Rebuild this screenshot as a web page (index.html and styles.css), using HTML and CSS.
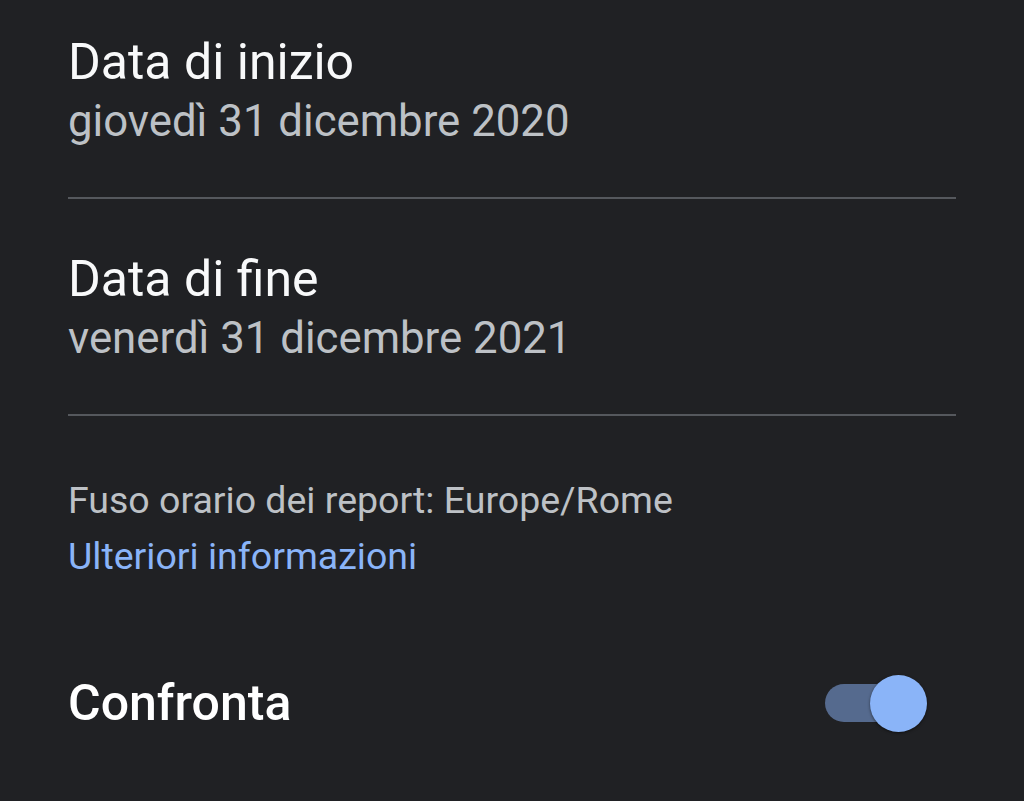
FILE: index.html
```html
<!DOCTYPE html>
<html lang="it">
<head>
  <meta charset="UTF-8" />
  <meta name="viewport" content="width=device-width, initial-scale=1.0" />
  <title>Intervallo di date</title>
  <link rel="stylesheet" href="styles.css">
</head>
<body>
  <div class="screen">
    <!-- Date rows -->
    <div class="date-item">
      <div class="item-title">Data di inizio</div>
      <div class="item-value">giovedì 31 dicembre 2020</div>
    </div>
    <div class="date-item">
      <div class="item-title">Data di fine</div>
      <div class="item-value">venerdì 31 dicembre 2021</div>
    </div>

    <!-- Timezone note -->
    <div class="tz-note">
      <div class="tz-text">Fuso orario dei report: Europe/Rome</div>
      <a class="tz-link" href="#">Ulteriori informazioni</a>
    </div>

    <!-- Compare toggle -->
    <div class="compare-row">
      <div class="compare-label">Confronta</div>
      <div class="switch on">
        <div class="switch-track"></div>
        <div class="switch-thumb"></div>
      </div>
    </div>
  </div>
</body>
</html>
```

FILE: styles.css
```css
/* Reset & Base */
* { margin: 0; padding: 0; box-sizing: border-box; }
html, body { width: 100%; height: 100%; background: #202124; color: #f1f3f4; font-family: Roboto, 'Noto Sans', sans-serif; overflow: hidden; }
.screen { display: flex; flex-direction: column; padding: 0 68px; }

/* Date items */
.date-item { padding: 50px 0 47px; border-bottom: 2px solid #55585d; }
.date-item:first-child { padding-top: 32px; }
.item-title { font-size: 50px; line-height: 60px; color: #f8f9fa; }
.item-value { font-size: 43.75px; line-height: 58px; color: #bdc1c6; }

/* Timezone note */
.tz-note { display: flex; flex-direction: column; padding-top: 56px; }
.tz-text { font-size: 37.5px; line-height: 56px; color: #bdc1c6; }
.tz-link { font-size: 37.5px; line-height: 56px; color: #8ab4f8; text-decoration: none; }

/* Compare row */
.compare-row { display: flex; justify-content: space-between; align-items: center; height: 80px; margin-top: 79px; }
.compare-label { font-size: 50px; font-weight: 500; color: #fff; }
.switch { position: relative; width: 102px; height: 57px; margin-right: 29px; }
.switch-track {
  position: absolute; left: 0; top: 9px; width: 92px; height: 38px; border-radius: 19px;
  background: #556a8e;
}
.switch-thumb {
  position: absolute; left: 45px; top: 0; width: 57px; height: 57px; border-radius: 50%;
  background: #8ab4f8; box-shadow: 0 1px 3px rgba(0,0,0,0.5);
}
```
